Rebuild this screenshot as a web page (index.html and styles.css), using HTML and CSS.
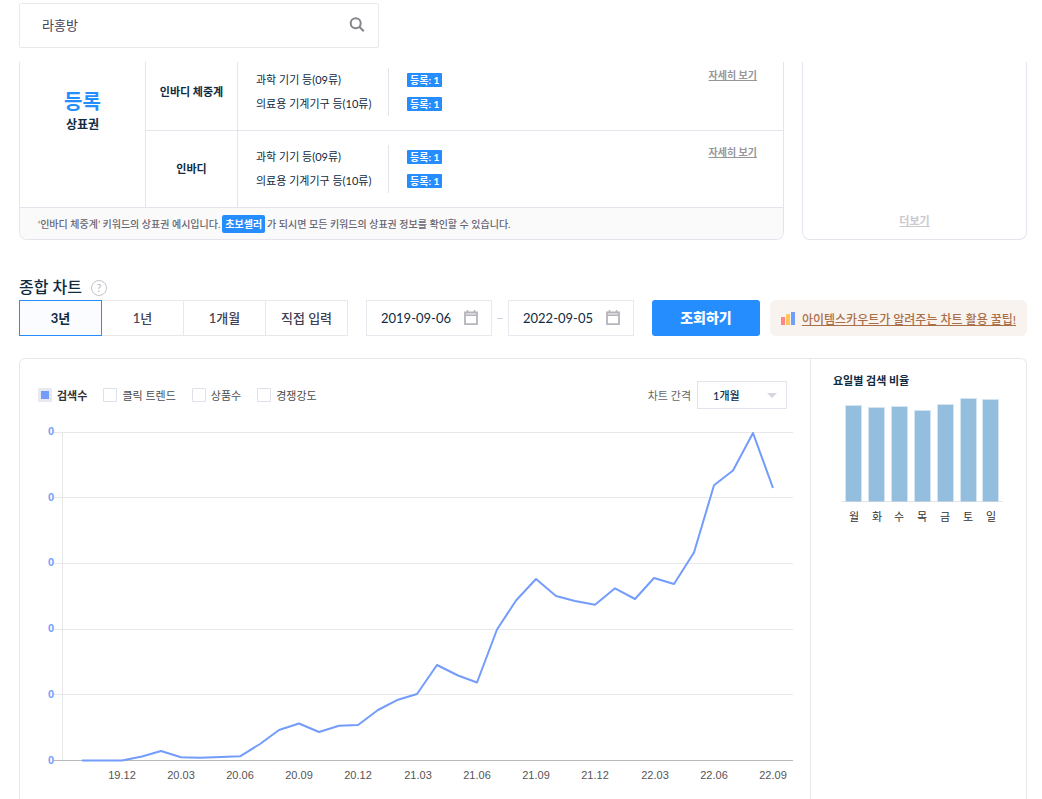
FILE: index.html
```html
<!DOCTYPE html>
<html lang="ko">
<head>
<meta charset="utf-8">
<meta name="viewport" content="width=device-width, initial-scale=1">
<title>종합 차트</title>
<link rel="stylesheet" href="styles.css">
</head>
<body>
<div class="page">
  <header class="topbar">
    <form class="search" role="search">
      <input class="search-input" type="text" value="라홍방" aria-label="키워드 검색">
      <button class="search-button" type="button" aria-label="검색">
        <svg width="16" height="16" viewBox="0 0 16 16" fill="none" stroke="#85858d" stroke-width="2"><circle cx="6.7" cy="6.2" r="5"/><path d="M10.300 9.800 14.800 14.300"/></svg>
      </button>
    </form>
  </header>

  <main class="main">
    <div class="summary">
      <section class="panel brand">
        <div class="brand-body">
          <div class="status"><strong class="status-value">등록</strong><span class="status-label">상표권</span></div>
          <div class="brand-rows">
            <div class="brand-row brand-row-first">
              <div class="keyword">인바디 체중계</div>
              <div class="detail">
                <ul class="classes"><li>과학 기기 등(09류)</li><li>의료용 기계기구 등(10류)</li></ul>
                <ul class="counts"><li><span class="badge">등록: 1</span></li><li><span class="badge">등록: 1</span></li></ul>
                <a class="detail-link" href="#">자세히 보기</a>
              </div>
            </div>
            <div class="brand-row">
              <div class="keyword">인바디</div>
              <div class="detail">
                <ul class="classes"><li>과학 기기 등(09류)</li><li>의료용 기계기구 등(10류)</li></ul>
                <ul class="counts"><li><span class="badge">등록: 1</span></li><li><span class="badge">등록: 1</span></li></ul>
                <a class="detail-link" href="#">자세히 보기</a>
              </div>
            </div>
          </div>
        </div>
        <p class="brand-note"><span>‘인바디 체중계’ 키워드의 상표권 예시입니다.</span><b class="grade">초보셀러</b><span>가 되시면 모든 키워드의 상표권 정보를 확인할 수 있습니다.</span></p>
      </section>
      <aside class="panel more"><a class="more-link" href="#">더보기</a></aside>
    </div>

    <div class="heading">
      <h2 class="title">종합 차트</h2>
      <button class="help" type="button" aria-label="도움말">?</button>
    </div>

    <div class="filters">
      <div class="periods" role="group" aria-label="기간">
        <button class="period period-active" type="button" aria-pressed="true">3년</button>
        <button class="period" type="button" aria-pressed="false">1년</button>
        <button class="period" type="button" aria-pressed="false">1개월</button>
        <button class="period" type="button" aria-pressed="false">직접 입력</button>
      </div>
      <div class="dates">
        <label class="date">
          <input class="date-input" type="text" value="2019-09-06" aria-label="시작일">
          <svg width="14" height="16" viewBox="0 0 14 16" fill="none" stroke="#b4b4bb"><path d="M1 2.5h12v11.7H1z" stroke-width="1.8"/><path d="M1 5.2h12" stroke-width="1.6"/><path d="M3.5 0v3M10.5 0v3" stroke-width="1.6"/></svg>
        </label>
        <span class="dash"></span>
        <label class="date">
          <input class="date-input" type="text" value="2022-09-05" aria-label="종료일">
          <svg width="14" height="16" viewBox="0 0 14 16" fill="none" stroke="#b4b4bb"><path d="M1 2.5h12v11.7H1z" stroke-width="1.8"/><path d="M1 5.2h12" stroke-width="1.6"/><path d="M3.5 0v3M10.5 0v3" stroke-width="1.6"/></svg>
        </label>
      </div>
      <button class="submit" type="button">조회하기</button>
      <a class="tip" href="#">
        <svg width="14" height="13" viewBox="0 0 14 13"><path fill="#ff8589" d="M0 5h4v8H0z"/><path fill="#ffc65c" d="M5 2h4v11H5z"/><path fill="#739cfb" d="M10 0h4v13h-4z"/></svg>
        <span class="tip-text">아이템스카우트가 알려주는 차트 활용 꿀팁!</span>
      </a>
    </div>

    <section class="charts">
      <div class="trend">
        <div class="trend-tools">
          <div class="series">
            <label class="series-item series-on"><input class="check" type="checkbox" checked>검색수</label>
            <label class="series-item"><input class="check" type="checkbox">클릭 트렌드</label>
            <label class="series-item"><input class="check" type="checkbox">상품수</label>
            <label class="series-item"><input class="check" type="checkbox">경쟁강도</label>
          </div>
          <div class="interval">
            <label for="interval">차트 간격</label>
            <span class="select-box"><select class="select" id="interval"><option>1개월</option></select></span>
          </div>
        </div>
        <svg class="trend-chart" viewBox="20 420 790 372" role="img" aria-label="검색수 추이">
          <g stroke="#e8e8ea" stroke-width="1">
            <path d="M54 432.5H793M54 497.5H793M54 563.5H793M54 629.5H793M54 694.5H793M62.500 432V760"/>
          </g>
          <path d="M54 760.5H793" stroke="#b9b9b9"/>
          <g class="y-axis">
            <text x="54" y="435">0</text><text x="54" y="501">0</text><text x="54" y="566">0</text><text x="54" y="632">0</text><text x="54" y="698">0</text><text x="54" y="764">0</text>
          </g>
          <polyline fill="none" stroke="#739cfb" stroke-width="2" stroke-linejoin="round" points="82,760.5 102,760.5 122,760.5 142,756.5 161,751 181,757.3 200,757.8 221,757 240,756.3 260,744 279,730 299,723.5 319,732 339,725.7 358,725 378,710 398,699.7 417,694 437,665 458,675.5 477,682.5 497,629.5 516,600.5 536,579 556,596 575,601 595,604.700 615,588.3 635,599 654,578 674,584 694,552.5 714,485.3 733,470.5 753,433 773,488"/>
          <g class="x-axis">
            <text x="122" y="779">19.12</text><text x="181" y="779">20.03</text><text x="240" y="779">20.06</text><text x="299" y="779">20.09</text><text x="358" y="779">20.12</text><text x="418" y="779">21.03</text><text x="477" y="779">21.06</text><text x="536" y="779">21.09</text><text x="595" y="779">21.12</text><text x="655" y="779">22.03</text><text x="714" y="779">22.06</text><text x="773" y="779">22.09</text>
          </g>
        </svg>
      </div>
      <div class="weekly">
        <h3 class="weekly-title">요일별 검색 비율</h3>
        <svg class="weekly-chart" viewBox="833 390 172 140" role="img" aria-label="요일별 검색 비율">
          <path d="M842 501.500H1003" stroke="#e3e3e8"/>
          <g fill="#94bede" stroke="#d3e4f2">
            <path d="M845.5 501.5V405.500h16V501.500M868.5 501.500V407.500h16V501.500M891.500 501.500V406.500h16V501.500M914.500 501.500V410.500h16V501.500M937.500 501.500V404.500h16V501.500M960.500 501.500V398.500h16V501.500M982.500 501.500V399.500h16V501.500"/>
          </g>
          <g class="days">
            <text x="854" y="521">월</text><text x="877" y="521">화</text><text x="899" y="521">수</text><text x="922" y="521">목</text><text x="945" y="521">금</text><text x="968" y="521">토</text><text x="991" y="521">일</text>
          </g>
        </svg>
      </div>
    </section>
  </main>
</div>
</body>
</html>
```

FILE: styles.css
```css
* {
  box-sizing: border-box;
}

body {
  margin: 0;
  background: #fff;
  color: #0f2b42;
  font-family: Lato, "Noto Sans CJK KR", sans-serif;
  font-size: 11px;
}

button,
input,
select {
  margin: 0;
  padding: 0;
  border: 0;
  background: none;
  color: inherit;
  font: inherit;
}

ul {
  margin: 0;
  padding: 0;
  list-style: none;
}

svg {
  flex: none;
}

.page {
  display: flex;
  flex-direction: column;
  min-height: 100vh;
  padding: 0 15px 0 19px;
}

.topbar {
  padding: 3px 0 14px;
}

.search {
  display: flex;
  align-items: center;
  width: 360px;
  height: 45px;
  padding: 0 13px 2px 22px;
  border: 1px solid #e9e9ec;
  border-radius: 2px;
}

.search-input {
  flex: 1;
  min-width: 0;
  color: #45405a;
  font-size: 13px;
}

.search-button {
  display: flex;
}

.main {
  display: flex;
  flex: 1;
  flex-direction: column;
}

.summary {
  display: grid;
  grid-template-columns: minmax(0, 1fr) 225px;
  gap: 18px;
}

.panel {
  border: 1px solid #e4e4ec;
  border-top: 0;
  border-radius: 0 0 8px 8px;
  overflow: hidden;
}

.brand-body {
  display: flex;
}

.status {
  display: flex;
  flex-direction: column;
  align-items: center;
  width: 125px;
  padding-top: 26px;
  font-weight: 500;
}

.status-value {
  color: #268dff;
  font-size: 20px;
  line-height: 26px;
}

.status-label {
  font-size: 12px;
  font-weight: 700;
  line-height: 22px;
}

.brand-rows {
  flex: 1;
}

.brand-row {
  display: flex;
}

.brand-row-first {
  border-bottom: 1px solid #e4e4ec;
}

.keyword,
.detail {
  padding: 14px 0;
  border-left: 1px solid #e4e4ec;
}

.brand-row-first .keyword,
.brand-row-first .detail {
  padding-top: 6px;
}

.keyword {
  display: flex;
  align-items: center;
  justify-content: center;
  width: 92px;
  padding-bottom: 16px;
  font-weight: 700;
}

.detail {
  display: flex;
  flex: 1;
  padding-left: 18px;
  padding-right: 26px;
  line-height: 24px;
}

.classes {
  width: 133px;
  border-right: 1px solid #e4e4ec;
}

.counts {
  flex: 1;
  padding-left: 18px;
}

.counts li {
  display: flex;
  align-items: center;
  height: 24px;
}

.badge {
  padding: 0 3px;
  border-radius: 1px;
  background: #268dff;
  color: #fff;
  font-size: 10px;
  font-weight: 700;
  line-height: 14px;
}

.detail-link {
  color: #96969a;
  font-size: 10px;
  font-weight: 700;
  line-height: 14px;
}

.brand-note {
  display: flex;
  align-items: center;
  gap: 2px;
  height: 32px;
  margin: 0;
  padding: 0 18px;
  border-top: 1px solid #e4e4ec;
  background: #fafafa;
  color: #666571;
  font-size: 10px;
  font-weight: 500;
}

.grade {
  padding: 0 3px;
  border-radius: 2px;
  background: #268dff;
  color: #fff;
  line-height: 18px;
}

.more {
  display: flex;
  align-items: flex-end;
  justify-content: center;
  padding-bottom: 10px;
}

.more-link {
  color: #c9c9ce;
  font-weight: 700;
  line-height: 16px;
}

.heading {
  display: flex;
  align-items: center;
  gap: 9px;
  height: 24px;
  margin-top: 36px;
}

.title {
  margin: 0;
  font-size: 16px;
  font-weight: 500;
  line-height: 20px;
  padding-bottom: 2px;
}

.help {
  width: 16px;
  height: 16px;
  border: 1px solid #c5c5c9;
  border-radius: 50%;
  color: #b8b8bd;
  font-size: 11px;
  line-height: 14px;
}

.filters {
  display: flex;
  height: 36px;
  font-size: 13px;
}

.periods {
  display: flex;
}

.period {
  width: 82px;
  padding-bottom: 2px;
  border: 1px solid #e8e8ea;
  border-left: 0;
  color: #3f4053;
  font-weight: 500;
}

.period-active {
  width: 83px;
  border: 1px solid #268dff;
  background: #fafcff;
  color: #0f2b42;
  font-weight: 700;
}

.dates {
  display: flex;
  align-items: center;
  margin: 0 18px;
}

.date {
  display: flex;
  align-items: center;
  width: 126px;
  height: 36px;
  padding: 0 13px 0 14px;
  border: 1px solid #e8e8ee;
}

.date-input {
  flex: 1;
  min-width: 0;
}

.dash {
  width: 6px;
  height: 1px;
  margin: 0 5px;
  background: #d2d2dc;
}

.submit {
  width: 108px;
  padding-bottom: 2px;
  border-radius: 3px;
  background: #268dff;
  color: #fff;
  font-size: 14px;
  font-weight: 900;
}

.tip {
  display: flex;
  flex: 1;
  align-items: center;
  justify-content: center;
  gap: 7px;
  margin-left: 10px;
  border-radius: 6px;
  background: #f9f3f0;
  color: #a96f49;
  font-size: 12px;
  font-weight: 500;
  white-space: nowrap;
  text-decoration: none;
}

.tip-text {
  text-decoration: underline;
}

.charts {
  display: flex;
  flex: 1;
  margin-top: 22px;
  border: 1px solid #e8e8ea;
  border-bottom: 0;
  border-radius: 6px 6px 0 0;
}

.trend {
  flex: 1;
  min-width: 0;
}

.trend-tools {
  display: flex;
  align-items: center;
  justify-content: space-between;
  padding: 22px 23px 11px 18px;
}

.series {
  display: flex;
  gap: 16px;
}

.series-item {
  display: flex;
  align-items: center;
  gap: 5px;
  color: #4c4c4e;
}

.series-on {
  color: #333;
  font-weight: 700;
}

.check {
  width: 14px;
  height: 14px;
  border: 1px solid #e0e0ea;
  border-radius: 1px;
  appearance: none;
}

.check:checked {
  border: 3px solid #e8e8f0;
  background: #739cfb;
}

.interval {
  display: flex;
  align-items: center;
  gap: 6px;
  color: #666;
}

.select-box {
  display: grid;
  align-items: center;
}

.select-box::after {
  grid-area: 1 / 1;
  justify-self: end;
  margin-right: 10px;
  border: 5px solid transparent;
  border-top-color: #d6d6e2;
  border-bottom-width: 0;
  content: "";
  pointer-events: none;
}

.select {
  grid-area: 1 / 1;
  width: 90px;
  height: 28px;
  padding-left: 15px;
  border: 1px solid #e3e3ee;
  border-radius: 0;
  color: #0f2b42;
  font-weight: 500;
  appearance: none;
}

.trend-chart,
.weekly-chart {
  display: block;
  width: 100%;
}

.y-axis,
.x-axis {
  font-family: "Liberation Sans", Arial, sans-serif;
  font-size: 11px;
}

.y-axis {
  fill: #739cfb;
  font-weight: 700;
  text-anchor: end;
}

.x-axis {
  fill: #555;
  text-anchor: middle;
}

.weekly {
  width: 216px;
  padding: 13px 21px 0 22px;
  border-left: 1px solid #e8e8ea;
}

.weekly-title {
  margin: 0 0 1px;
  font-size: 11px;
  font-weight: 700;
  line-height: 17px;
}

.days {
  fill: #333;
  font-size: 11px;
  text-anchor: middle;
}
```
